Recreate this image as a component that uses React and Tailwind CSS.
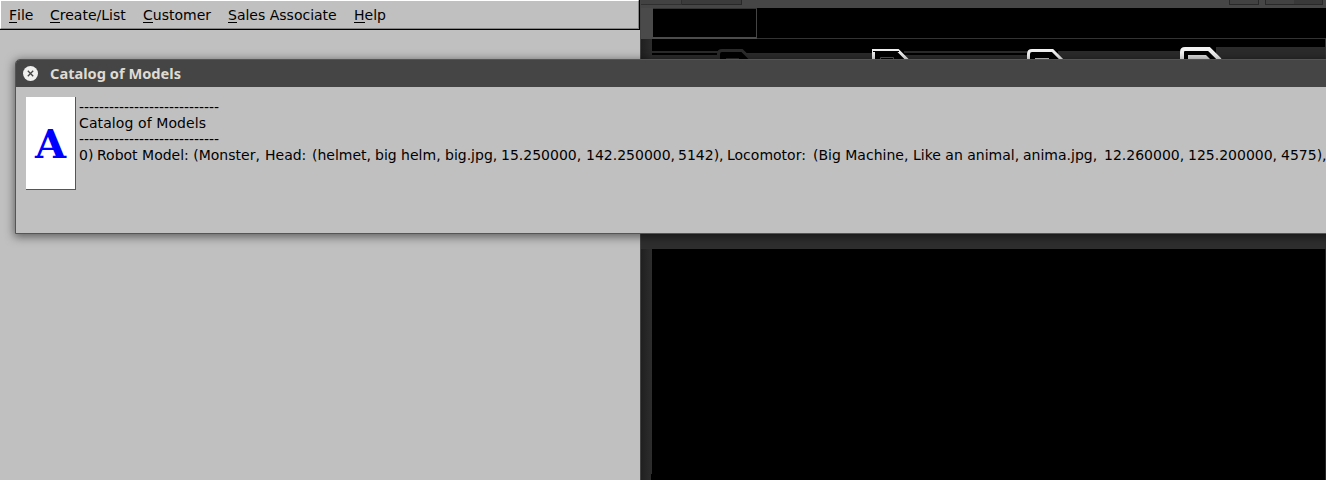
import React from 'react';

const menus = [
  { key: 'F', rest: 'ile', width: 'w-[41px]' },
  { key: 'C', rest: 'reate/List', width: 'w-[93px]' },
  { key: 'C', rest: 'ustomer', width: 'w-[85px]' },
  { key: 'S', rest: 'ales Associate', width: 'w-[126px]' },
  { key: 'H', rest: 'elp', width: 'w-[40px]' },
];

const modelFields = [
  { text: '0)', width: 'w-[18px]' },
  { text: 'Robot Model: (Monster,', width: 'w-[168px]' },
  { text: 'Head:', width: 'w-[47px]' },
  { text: '(helmet,', width: 'w-[63px]' },
  { text: 'big helm,', width: 'w-[70px]' },
  { text: 'big.jpg,', width: 'w-[56px]' },
  { text: '15.250000,', width: 'w-[85px]' },
  { text: '142.250000,', width: 'w-[92px]' },
  { text: '5142),', width: 'w-[49px]' },
  { text: 'Locomotor:', width: 'w-[86px]' },
  { text: '(Big Machine,', width: 'w-[100px]' },
  { text: 'Like an animal,', width: 'w-[110px]' },
  { text: 'anima.jpg,', width: 'w-[81px]' },
  { text: '12.260000,', width: 'w-[84px]' },
  { text: '125.200000,', width: 'w-[93px]' },
  { text: '4575),', width: 'w-[50px]' },
];

function MenuBar() {
  return (
    <nav className="flex h-[30px] shrink-0 border-r border-b border-black">
      <div className="flex flex-1 border-t border-l border-t-white border-l-white border-r border-b border-r-[#858585] border-b-[#858585] pt-[5px] pl-2 text-[14px] leading-[18px]">
        {menus.map((m, i) => (
          <span key={i} className={`${m.width} shrink-0 whitespace-nowrap`}>
            <span className="inline-block h-[17px] border-b border-black">{m.key}</span>
            {m.rest}
          </span>
        ))}
      </div>
    </nav>
  );
}

function Toolbar() {
  return (
    <svg className="block h-[20px] w-[674px]" viewBox="652 39 674 20">
      <rect x="652" y="39" width="674" height="20" fill="#000" />
      <path d="M652 51h68v2h-68zM652 55h65v4h-65zM745 53h127v6h-127zM904 51h123v2h-123zM904 55h123v4h-123zM1058 51h122v8h-122zM1216 47h109v12h-109z" fill="#2b2b2b" />
      <path d="M1325 39h1v20h-1z" fill="#333" />
      <path d="M718.5 60v-6q0-3.5 3.5-3.5h20l9 9" fill="#000" stroke="#2b2b2b" strokeWidth="3" />
      <path d="M726 58.5h13" stroke="#2b2b2b" />
      <path d="M873.5 60v-9.5h24.5l9.5 9.5" fill="#000" stroke="#eee" strokeWidth="3" />
      <path d="M873 51.5h26" stroke="#000" />
      <path d="M880.5 59v-1.5h13v1.5" fill="none" stroke="#555" />
      <path d="M1028.5 60v-6q0-3.5 3.5-3.5h20.5l9.5 9.5" fill="#000" stroke="#f2f2f2" strokeWidth="3" />
      <path d="M1035 58.5h14" stroke="#ccc" />
      <path d="M1182 60v-8q0-3 3-3h24l11 11" fill="#000" stroke="#f2f2f2" strokeWidth="4" />
      <path d="M1188 59v-4h18l4 4z" fill="#ddd" />
    </svg>
  );
}

function DarkDesktop() {
  return (
    <section className="flex w-[685px] shrink-0 flex-col bg-black">
      <div className="flex h-[8px] shrink-0 items-start bg-[#464646]">
        <div className="h-[5px] w-[41px] border-r border-b border-[#303030] bg-[#424242]" />
        <div className="h-[5px] w-[60px] border-r border-b border-[#282828] bg-[#3b3b3b]" />
        <div className="ml-[487px] h-[5px] w-[30px] border-x border-b border-[#292929] bg-[#424242]" />
        <div className="ml-[6px] h-[5px] w-[29px] border-b border-l border-[#292929] bg-[#424242]" />
        <div className="h-[5px] w-[29px] border-r border-b border-[#292929] bg-[#393939]" />
      </div>
      <div className="flex h-[31px] shrink-0">
        <div className="w-[12px] bg-[#4a4a4a]" />
        <div className="w-[104px] border-t border-r border-b-2 border-t-[#333] border-r-[#444] border-b-[#4c4c4c]" />
        <div className="flex-1 border-b border-[#333]" />
      </div>
      <div className="flex h-[20px] shrink-0">
        <div className="w-[11px] bg-linear-to-r from-[#202020] to-[#2c2c2c]" />
        <Toolbar />
      </div>
      <div className="h-[175px] shrink-0" />
      <div className="h-[15px] shrink-0 bg-[#2e2e2e]" />
      <div className="flex flex-1">
        <div className="flex w-[11px] flex-col">
          <div className="flex-1 bg-linear-to-r from-[#202020] to-[#2d2d2d]" />
          <div className="h-[6px] w-[10px] bg-linear-to-r from-[#202020] to-[#2c2c2c]" />
        </div>
        <div className="flex-1 border-r border-[#252525]" />
      </div>
    </section>
  );
}

function CatalogWindow() {
  return (
    <section className="absolute top-[59px] left-[15px] flex h-[175px] w-[1330px] flex-col overflow-hidden rounded-t-[5px] border border-[#555] bg-[#c0c0c0] shadow-[0_2px_10px_1px_rgba(0,0,0,0.5)]">
      <header className="flex h-[27px] shrink-0 items-center bg-[#454545] pl-[7px]">
        <svg className="h-[15px] w-[15px]" viewBox="0 0 15 15">
          <circle cx="7.5" cy="7.5" r="7.5" fill="#f0f0ef" />
          <path d="m4.8 4.8 5.4 5.4m0-5.4-5.4 5.4" stroke="#444" strokeWidth="1.3" />
        </svg>
        <svg className="ml-[12px] h-[27px] w-[150px]" viewBox="0 0 150 27">
          <text x="0" y="18.5" textLength="131" lengthAdjust="spacingAndGlyphs" className="fill-[#dfdbd2] font-['Noto_Sans',sans-serif] text-[14px] font-bold">
            Catalog of Models
          </text>
        </svg>
      </header>
      <div className="flex items-start pt-[10px] pl-[10px]">
        <div className="flex h-[93px] w-[50px] shrink-0 items-center justify-center border-r border-b border-[#555] bg-white pt-[2px] font-['DejaVu_Serif',serif] text-[40px] font-bold text-[#0000ff]">
          A
        </div>
        <div className="ml-[3px] pt-[2px] text-[14px] leading-4 whitespace-nowrap">
          <div className="tracking-[-0.05px]">----------------------------</div>
          <div className="tracking-[0.1px]">Catalog of Models</div>
          <div className="tracking-[-0.05px]">----------------------------</div>
          <div className="flex">
            {modelFields.map((f, i) => (
              <span key={i} className={`${f.width} shrink-0`}>{f.text}</span>
            ))}
          </div>
        </div>
      </div>
    </section>
  );
}

export default function App() {
  return (
    <main className="relative flex h-[480px] w-[1326px] overflow-hidden bg-[#c0c0c0] font-['DejaVu_Sans',sans-serif] text-black">
      <section className="flex w-[641px] shrink-0 flex-col border-r border-[#444]">
        <MenuBar />
      </section>
      <DarkDesktop />
      <CatalogWindow />
    </main>
  );
}
